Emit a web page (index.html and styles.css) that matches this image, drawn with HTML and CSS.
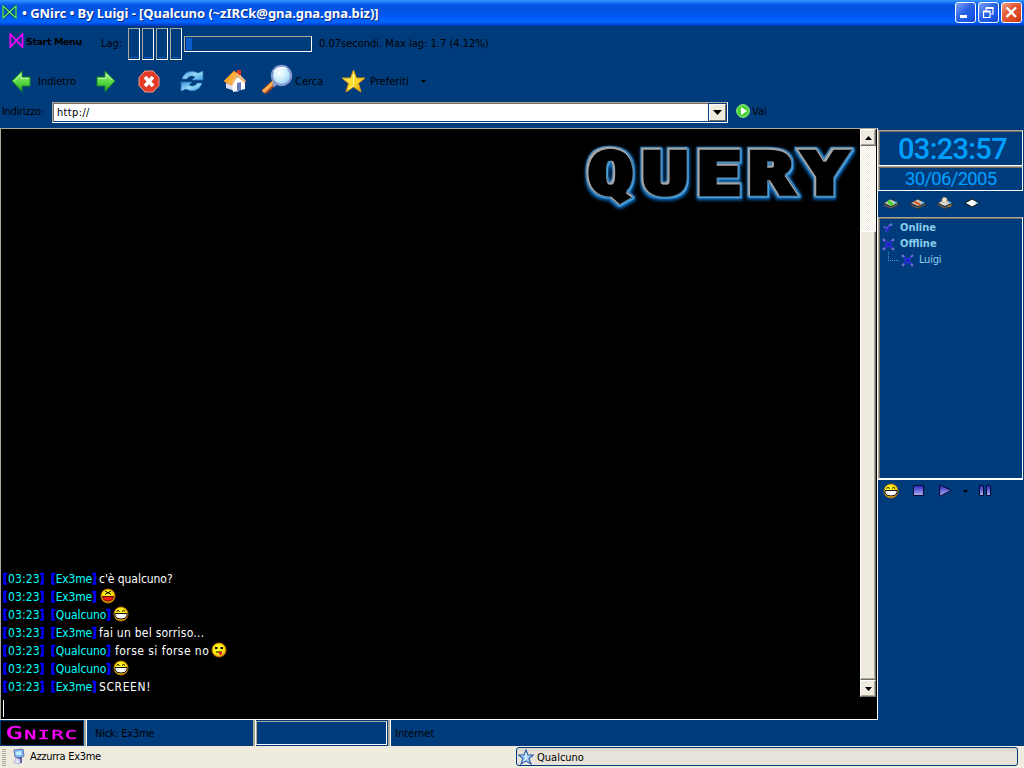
FILE: index.html
```html
<!DOCTYPE html>
<html lang="it">
<head>
<meta charset="utf-8">
<title>GNirc</title>
<link rel="stylesheet" href="styles.css">
</head>
<body>
<svg class="defs" width="0" height="0">
  <defs>
    <linearGradient id="gGreen" x1="0" y1="0" x2="0" y2="1"><stop offset="0" stop-color="#9df08a"/><stop offset=".5" stop-color="#5ddc45"/><stop offset="1" stop-color="#27a824"/></linearGradient>
    <linearGradient id="gBlue" x1="0" y1="0" x2="1" y2="1"><stop offset="0" stop-color="#2e86cf"/><stop offset=".5" stop-color="#9adcf8"/><stop offset="1" stop-color="#3e9be0"/></linearGradient>
    <linearGradient id="gStar" x1="0" y1="0" x2="1" y2="1"><stop offset="0" stop-color="#fff36a"/><stop offset=".55" stop-color="#ffd92a"/><stop offset="1" stop-color="#e09a10"/></linearGradient>
    <linearGradient id="gPlay" x1="0" y1="0" x2="0" y2="1"><stop offset="0" stop-color="#2424b8"/><stop offset="1" stop-color="#b4b4fa"/></linearGradient>
    <radialGradient id="gLens" cx=".4" cy=".35" r=".7"><stop offset="0" stop-color="#fff"/><stop offset=".5" stop-color="#cdeefb"/><stop offset="1" stop-color="#8ccbf0"/></radialGradient>
    <radialGradient id="gFace" cx=".45" cy=".4" r=".6"><stop offset="0" stop-color="#ffff40"/><stop offset=".7" stop-color="#ffe000"/><stop offset="1" stop-color="#e09000"/></radialGradient>
    <filter id="bevel" x="-10%" y="-20%" width="120%" height="150%" color-interpolation-filters="sRGB">
      <feMorphology in="SourceAlpha" operator="dilate" radius="1.5" result="fat"/>
      <feFlood flood-color="#0866b8"/><feComposite in2="fat" operator="in"/><feOffset dx="1" dy="2"/><feGaussianBlur stdDeviation="1.6" result="halo"/>
      <feMorphology in="SourceAlpha" operator="dilate" radius="1" result="thin"/>
      <feFlood flood-color="#4fa5e2"/><feComposite in2="thin" operator="in"/><feOffset dx="1" dy="1"/><feGaussianBlur stdDeviation=".5" result="blue"/>
      <feFlood flood-color="#3f7cab"/><feComposite in2="thin" operator="in"/><feOffset dx="-.5" dy="-.5"/><feGaussianBlur stdDeviation=".5" result="blue2"/>
      <feFlood flood-color="#a6a6a6"/><feComposite in2="SourceAlpha" operator="in" result="grey"/>
      <feMorphology in="SourceAlpha" operator="erode" radius="1"/><feOffset dx="1" dy="1" result="core"/>
      <feFlood flood-color="#000"/><feComposite in2="core" operator="in"/><feGaussianBlur stdDeviation=".5" result="black"/>
      <feMerge><feMergeNode in="halo"/><feMergeNode in="blue"/><feMergeNode in="blue2"/><feMergeNode in="grey"/><feMergeNode in="black"/></feMerge>
    </filter>
    <symbol id="grin" viewBox="0 0 16 16">
      <circle cx="8" cy="8" r="7" fill="url(#gFace)" stroke="#c87800" stroke-width=".8"/>
      <path d="M3.500 5.500Q5 3.300 6.600 5.500M9 5.500Q10.600 3.300 12.200 5.500" fill="none" stroke="#000" stroke-width="1"/>
      <path d="M2 7.500H14V10Q13 13 8 13Q3 13 2 10Z" fill="#fff" stroke="#111" stroke-width="1"/>
      <path d="M3 10H5M11 10H13" stroke="#ccc"/>
    </symbol>
    <symbol id="cross" viewBox="0 0 13 13">
      <path d="M1 1L12 12M12 1L1 12" fill="none" stroke="#6a6fd2" stroke-width="2.200"/>
      <path d="M3 3L10 10M10 3L3 10" stroke="#1412dc" stroke-width="1.500"/>
    </symbol>
    <symbol id="disk" viewBox="0 0 16 11">
      <path d="M0 5.500L8 1L16 5V7L8 11L0 7Z" fill="#333"/>
      <path d="M1.500 5L7.500 1.500L14.500 4.800L8 8Z" fill="#c9ccc9"/>
      <path d="M1 7L8 10L15 6.300" fill="none" stroke="#777" stroke-width=".8"/>
      <path d="M12 5L14 4.500" stroke="#3aaef0" stroke-width="2"/>
    </symbol>
  </defs>
</svg>
<div class="app">
  <header class="titlebar">
    <svg class="logo" width="15" height="14" viewBox="0 0 15 14"><path d="M1 1V13L14 1V13Z" fill="none" stroke="#004a20" stroke-width="2.500"/><path d="M1 1V13L14 1V13Z" fill="none" stroke="#66ef8c" stroke-width="1.200"/></svg>
    <h1 class="title">• GNirc • By Luigi - [Qualcuno (~zIRCk@gna.gna.gna.biz)]</h1>
    <div class="winbtns">
      <span class="winbtn"><svg width="19" height="19"><path d="M4 13.500H11" stroke="#fff" stroke-width="3"/></svg></span>
      <span class="winbtn"><svg width="19" height="19"><path d="M7 8V5H14V11H12" fill="none" stroke="#fff" stroke-width="1.200"/><path d="M4.500 8.500H11V14.500H4.500Z" fill="none" stroke="#fff" stroke-width="1.200"/><path d="M4 8.500H11.500M7 5H14.500" stroke="#fff" stroke-width="2"/></svg></span>
      <span class="winbtn close"><svg width="19" height="19"><path d="M4.500 4.500L14 14M14 4.500L4.500 14" stroke="#fff" stroke-width="2.400"/></svg></span>
    </div>
  </header>

  <div class="row lagbar">
    <svg class="start-ico" width="15" height="15" viewBox="0 0 15 15"><path d="M1.300 1V14L13.500 1V14Z" fill="none" stroke="#ff00ff" stroke-width="1.700"/></svg>
    <b class="start">Start Menu</b>
    <span class="lag">Lag:</span>
    <div class="meters"><i></i><i></i><i></i><i></i></div>
    <div class="progress"><i></i></div>
    <span class="lagtext">0.07secondi. Max lag: 1.7 (4.12%)</span>
  </div>

  <nav class="row navbar">
    <svg class="back" width="20" height="22" viewBox="0 0 20 22"><path d="M1 11L11 1V7H19V16H11V21.500Z" fill="url(#gGreen)" stroke="#168a24"/><path d="M3.500 11L10 4.500V8.500H18" fill="none" stroke="#c4f8b5"/></svg>
    <span class="t-back">Indietro</span>
    <svg class="fwd" width="20" height="22" viewBox="0 0 20 22"><path d="M19 11L9 1V7H1V16H9V21.500Z" fill="url(#gGreen)" stroke="#168a24"/><path d="M2 8.500H10V4.500L16 10" fill="none" stroke="#c4f8b5"/></svg>
    <svg class="stop" width="22" height="23" viewBox="0 0 22 23"><path d="M7 1H15L21 7.500V15.500L15 22H7L1 15.500V7.500Z" fill="#e23a26" stroke="#f6a28e"/><path d="M7 7L15 16M15 7L7 16" stroke="#fff" stroke-width="3.600"/></svg>
    <svg class="refresh" width="24" height="22" viewBox="0 0 24 22"><path d="M2 9C4 2 11 -1 18 3L23 1V10H12L15 7C12 5 8 6 7 9Z" fill="url(#gBlue)" stroke="#2474b8" stroke-width=".7"/><path d="M22 13C20 20 13 23 6 19L1 21V12H12L9 15C12 17 16 16 17 13Z" fill="url(#gBlue)" stroke="#2474b8" stroke-width=".7"/></svg>
    <svg class="home" width="24" height="24" viewBox="0 0 24 24"><path d="M14 1H18V8L14 5Z" fill="#d73518"/><path d="M3 12L9 7L15 14V23L3 19Z" fill="#d5dcf0"/><path d="M9 13L17 6L22 11V20L10 23Z" fill="#fff"/><path d="M11 2L1 12L4 14L9 16L15 5Z" fill="#ffad36" stroke="#e9851e" stroke-width=".7"/><path d="M14 4L23 12L21.500 14L14 7.500L10 15L8 14Z" fill="#f4b875"/><path d="M14 14L18 13V21L14 22Z" fill="#6679b4"/></svg>
    <svg class="search" width="34" height="32" viewBox="0 0 34 32"><path d="M15 17L3 28" stroke="#a94320" stroke-width="6"/><path d="M14 17L2 28" stroke="#ffac4c" stroke-width="3.300"/><path d="M12 22L15.500 18" stroke="#8d95c8" stroke-width="4"/><circle cx="20.500" cy="11.500" r="9.600" fill="url(#gLens)" stroke="#8597d2" stroke-width="2.200"/><path d="M13 8A9 9 0 0 1 26 5" fill="none" stroke="#fff" stroke-width="1.300"/></svg>
    <span class="t-search">Cerca</span>
    <svg class="fav" width="25" height="24" viewBox="0 0 25 24"><path d="M12.500 1L15.500 9H24L17.500 14.500L20 23L12.500 18L5 23L7.500 14.500L1 9H9.500Z" fill="url(#gStar)" stroke="#d69710" stroke-width="1"/><path d="M12.500 5V17L7 20" fill="none" stroke="#fff9a0" stroke-width="1"/></svg>
    <span class="t-fav">Preferiti</span>
    <svg class="caret" width="5" height="3"><path d="M0 0H5L2.500 3Z"/></svg>
  </nav>

  <div class="row address">
    <span class="t-addr">Indirizzo:</span>
    <div class="combo"><span class="url">http://</span><span class="drop"><svg width="9" height="5"><path d="M0 0H9L4.500 5Z"/></svg></span></div>
    <svg class="go" width="14" height="14" viewBox="0 0 14 14"><circle cx="7" cy="7" r="6.400" fill="#4ed53c" stroke="#9ced88"/><path d="M5 3L11 7L5 11Z" fill="#fff"/></svg>
    <span class="t-go">Vai</span>
  </div>

  <main class="content">
    <section class="query">
      <div class="view">
        <div class="chat">
          <svg class="banner" width="286" height="76" viewBox="0 0 286 76">
            <g filter="url(#bevel)"><text class="banner-text" transform="scale(1.3 1)" x="10.200 52.200 93.700 133.500 175" y="56">QUERY</text></g>
          </svg>
          <div class="lines">
            <p><span class="time"><b>[</b>03:23<b>]</b></span><span class="ex"><b>[</b>Ex3me<b>]</b></span><span class="m1">c'è qualcuno?</span></p>
            <p><span class="time"><b>[</b>03:23<b>]</b></span><span class="ex"><b>[</b>Ex3me<b>]</b></span><svg class="smile s1" width="16" height="16" viewBox="0 0 16 16"><circle cx="8" cy="8" r="7" fill="url(#gFace)" stroke="#c87800" stroke-width=".8"/><path d="M5 3L11 6.500M11 3L5 6.500" fill="none" stroke="#000"/><path d="M2.500 8.500H13.500Q13 13 8 13Q3 13 2.500 8.500Z" fill="#f02018" stroke="#600"/></svg></p>
            <p><span class="time"><b>[</b>03:23<b>]</b></span><span class="qu"><b>[</b>Qualcuno<b>]</b></span><svg class="smile" width="16" height="16"><use href="#grin"/></svg></p>
            <p><span class="time"><b>[</b>03:23<b>]</b></span><span class="ex"><b>[</b>Ex3me<b>]</b></span><span class="m2">fai un bel sorriso...</span></p>
            <p><span class="time"><b>[</b>03:23<b>]</b></span><span class="qu"><b>[</b>Qualcuno<b>]</b></span><span class="m3">forse si forse no</span><svg class="smile" width="16" height="16" viewBox="0 0 16 16"><circle cx="8" cy="8" r="7" fill="url(#gFace)" stroke="#c87800" stroke-width=".8"/><path d="M4 6H6.500M9.500 6H12" stroke="#000" stroke-width="2"/><path d="M5 10H11" stroke="#000"/><path d="M8 10H11V12Q9.500 14 8 12Z" fill="#e81830"/></svg></p>
            <p><span class="time"><b>[</b>03:23<b>]</b></span><span class="qu"><b>[</b>Qualcuno<b>]</b></span><svg class="smile" width="16" height="16"><use href="#grin"/></svg></p>
            <p><span class="time"><b>[</b>03:23<b>]</b></span><span class="ex"><b>[</b>Ex3me<b>]</b></span><span class="m4">SCREEN!</span></p>
          </div>
        </div>
        <div class="scroll">
          <span class="sbtn"><svg width="7" height="4"><path d="M0 4H7L3.500 0Z"/></svg></span>
          <span class="track"></span>
          <span class="thumb"></span>
          <span class="sbtn"><svg width="7" height="4"><path d="M0 0H7L3.500 4Z"/></svg></span>
        </div>
      </div>
      <div class="input"><i></i></div>
    </section>

    <aside class="side">
      <div class="clock"><span>03:23:57</span></div>
      <div class="date"><span>30/06/2005</span></div>
      <div class="tools">
        <svg width="16" height="13" viewBox="0 -1 16 13"><use href="#disk" width="16" height="11"/><path d="M5 3L10 7" stroke="#42d52c" stroke-width="3"/></svg>
        <svg width="16" height="13" viewBox="0 -1 16 13"><use href="#disk" width="16" height="11"/><path d="M4 3.500L10 6.500" stroke="#e05a20" stroke-width="2.500"/></svg>
        <svg width="16" height="13" viewBox="0 -1 16 13"><use href="#disk" width="16" height="11"/><circle cx="7.500" cy="2" r="2.500" fill="#efe4cc" stroke="#bda987"/><path d="M4.500 7Q7.500 2 11 6Z" fill="#ddd"/><path d="M11 8H14" stroke="#a66b34" stroke-width="2"/></svg>
        <svg width="16" height="13" viewBox="0 -1 16 13"><path d="M1 5L8 1L15.500 5L8 9Z" fill="#fff" stroke="#111" stroke-width="1"/><path d="M11.500 5H14" stroke="#3aaef0" stroke-width="1.500"/></svg>
      </div>
      <div class="tree">
        <div class="node"><svg class="check" width="13" height="13" viewBox="0 0 13 13"><path d="M2 5Q5 6 5 10Q6 4 10 2" fill="none" stroke="#7076e0" stroke-width="2.200"/><path d="M3 5.500L5.200 9L8 4" fill="none" stroke="#2020c8" stroke-width="1.700"/></svg><b class="online">Online</b></div>
        <div class="node"><svg width="13" height="13"><use href="#cross"/></svg><b class="offline">Offline</b></div>
        <div class="node leaf"><i class="branch"></i><svg width="13" height="13"><use href="#cross"/></svg><span class="luigi">Luigi</span></div>
      </div>
      <div class="player">
        <svg class="pg" width="16" height="16"><use href="#grin"/></svg>
        <svg class="ps" width="11" height="11"><path d="M.5 .5H10.500V10.500H.5Z" fill="url(#gPlay)" stroke="#080830"/></svg>
        <svg class="pp" width="13" height="13"><path d="M.7 .8L12.300 6.500L.7 12.200Z" fill="url(#gPlay)" stroke="#080830"/></svg>
        <svg class="pc" width="5" height="3"><path d="M0 0H5L2.500 3Z"/></svg>
        <svg class="pz" width="12" height="11"><path d="M.5 .5H4.500V10.500H.5ZM7.500 .5H11.500V10.500H7.500Z" fill="url(#gPlay)" stroke="#080830"/></svg>
      </div>
    </aside>
  </main>

  <div class="status">
    <div class="brand"><span>Gnirc</span></div>
    <div class="cell c1"><span class="t-nick">Nick: Ex3me</span></div>
    <div class="cell c2"><div class="empty"></div></div>
    <div class="cell c3"><span class="t-net">Internet</span></div>
  </div>

  <footer class="switchbar">
    <i class="grip"></i>
    <svg class="net" width="13" height="17" viewBox="0 0 13 17"><path d="M2 2L11 1L12 8L8 10L3 9Z" fill="#7fbdf0" stroke="#6e70b4"/><path d="M3.500 4L9 3L9.500 7H4.500Z" fill="#c2efff"/><path d="M5 9H10V15H6Z" fill="#5a5aa6"/><path d="M4 10L8 11V16L2 15Z" fill="#dde4f4" stroke="#9090c0" stroke-width=".6"/></svg>
    <span class="t-azz">Azzurra Ex3me</span>
    <div class="task">
      <svg width="16" height="16" viewBox="0 0 16 16"><path d="M8 1L10 6H15.500L11 9.500L13 15L8 11.800L3 15L5 9.500L.5 6H6Z" fill="#a8d4fa" stroke="#2c5ca8" stroke-width="1.100"/><path d="M8 4V10L5.500 12" fill="none" stroke="#fff"/></svg>
      <span class="t-qual">Qualcuno</span>
    </div>
  </footer>
</div>
</body>
</html>
```
FILE: styles.css
```css
* { box-sizing: border-box; }
body { margin: 0; }
.defs { position: absolute; }
svg { display: block; flex: none; }
.app {
  width: 1024px; height: 768px; overflow: hidden;
  display: flex; flex-direction: column;
  background: #003c7b; color: #000;
  font: 11px/14px "DejaVu Sans Condensed", "DejaVu Sans", sans-serif;
  white-space: nowrap;
}
.app span, .app b { flex: none; }

.titlebar {
  height: 26px; flex: none; display: flex; align-items: flex-start; padding: 0 2px 0 2px;
  background: linear-gradient(#3a95ff 0, #1d7dfc 2px, #0357e4 5px, #0153e2 10px, #005dfb 18px, #0066ff 22px, #0040cc 25px, #0034b4 26px);
}
.logo { margin-top: 5px; }
.title {
  margin: 5px auto 0 5px; font: bold 13px/17px "Noto Sans", "Open Sans", sans-serif;
  color: #fff; text-shadow: 1px 1px 0 #0a2a82; letter-spacing: -.05px;
}
.winbtns { display: flex; gap: 2px; margin-top: 2px; }
.winbtn {
  width: 21px; height: 21px; border: 1px solid #fff; border-radius: 3px;
  background: linear-gradient(135deg, #7ea4f8, #2c62e4 45%, #1858e8 75%, #1444c0);
}
.close { background: linear-gradient(135deg, #f0a48c, #e25a38 40%, #dc4720 75%, #b83210); }

.row { display: flex; flex: none; align-items: flex-start; }
.lagbar { height: 36px; padding-left: 9px; }
.start-ico { margin-top: 7px; }
.start { width: 74px; margin: 9px 0 0 2px; font: bold 9.500px/14px "DejaVu Sans", sans-serif; letter-spacing: -.4px; }
.start + .lag { width: 28px; margin: 11px 0 0 1px; }
.meters { display: flex; gap: 2px; margin-top: 2px; margin-left: -1px; }
.meters i {
  width: 12px; height: 32px; border: 1px solid; border-color: #aca899 #fff #fff #aca899;
  background: linear-gradient(#0a5cc0, #0a5cc0) 50% 28px / 8px 1px no-repeat;
}
.progress { width: 128px; height: 16px; margin: 10px 0 0 2px; padding: 1px; border: 1px solid; border-color: #aca899 #fff #fff #aca899; }
.progress i { display: block; width: 6px; height: 12px; background: #0a5cc8; }
.lagtext { margin: 11px 0 0 7px; }

.navbar { height: 38px; padding-left: 11px; }
.back { margin-top: 8px; }
.t-back { width: 57px; margin: 13px 0 0 7px; }
.fwd { margin: 8px 0 0 1px; }
.stop { margin: 8px 0 0 22px; }
.refresh { margin: 8px 0 0 20px; }
.home { margin: 7px 0 0 19px; }
.search { margin: 2px 0 0 14px; }
.t-search { width: 45px; margin: 13px 0 0 0; }
.fav { margin: 7px 0 0 1px; }
.t-fav { width: 51px; margin: 13px 0 0 4px; }
.caret { margin-top: 18px; }

.address { height: 28px; padding-left: 2px; }
.t-addr { width: 50px; margin-top: 5px; letter-spacing: -.3px; }
.combo {
  width: 676px; height: 21px; margin-top: 2px; display: flex; background: #fff;
  border: 1px solid; border-color: #aca899 #fff #fff #aca899;
  box-shadow: inset 1px 1px #716f64, inset -1px -1px #003c7b;
}
.url { margin: 3px auto 0 4px; letter-spacing: .35px; }
.drop {
  width: 17px; height: 17px; margin: 1px; display: flex; align-items: center; justify-content: center;
  background: #efebde; border: 1px solid; border-color: #fff #716f64 #716f64 #fff; outline: 1px solid #003c7b;
}
.go { margin: 4px 0 0 8px; }
.t-go { margin: 5px 0 0 2px; }

.content { flex: none; display: flex; height: 592px; }
.query {
  width: 878px; display: flex; flex-direction: column; background: #000;
  border: 1px solid; border-color: #aca899 #fff #fff #aca899;
}
.view { height: 568px; display: flex; }
.chat { width: 859px; display: flex; flex-direction: column; justify-content: space-between; }
.banner { align-self: flex-end; margin: 8px 0 0; }
.banner-text {
  font: bold 57px "DejaVu Sans Mono", monospace;
  fill: #000; stroke: #000; stroke-width: 6.500px; stroke-linejoin: miter;
}
.lines { padding: 0 0 1px 2px; font: 12px/18px "DejaVu Sans Condensed", "DejaVu Sans", sans-serif; color: #fff; }
.lines p { margin: 0; height: 18px; display: flex; }
.lines b { color: #00f; -webkit-text-stroke: .5px #00f; }
.time, .ex, .qu { color: #0ff; }
.time { width: 48px; letter-spacing: .1px; }
.ex { width: 48px; letter-spacing: -.2px; }
.qu { width: 64px; letter-spacing: -.1px; }
.m1 { letter-spacing: -.05px; }
.m2 { letter-spacing: .25px; }
.m3 { width: 98px; letter-spacing: .45px; }
.m4 { letter-spacing: .6px; }
.smile { margin-left: -2px; }
.s1 { margin-left: 1px; }
.scroll { width: 16px; display: flex; flex-direction: column; }
.sbtn, .thumb { background: #efebde; border: 1px solid; border-color: #fff #716f64 #716f64 #fff; box-shadow: inset -1px -1px #aca899; }
.sbtn { height: 17px; display: flex; align-items: center; justify-content: center; }
.track { height: 85px; background: repeating-conic-gradient(#fff 0 25%, #efebde 0 50%) 0 0 / 2px 2px; }
.thumb { height: 449px; }
.input { flex: 1; padding: 3px 0 0 2px; }
.input i { display: block; width: 1px; height: 17px; background: #fff; }

.side { width: 146px; display: flex; flex-direction: column; padding-top: 2px; color: #00a0ff; }
.clock, .date, .tree { border: 1px solid; border-color: #aca899 #fff #fff #aca899; box-shadow: inset 1px 1px #716f64; width: 145px; flex: none; }
.clock { height: 36px; padding: 2px 0 0 19px; font: 500 29px/33px Roboto, "Liberation Sans", sans-serif; letter-spacing: -.65px; }
.date { height: 25px; padding: 1px 0 0 26px; font: 18.500px/22px Roboto, "Liberation Sans", sans-serif; letter-spacing: -.7px; }
.clock span, .date span { display: block; }
.tools { height: 26px; display: flex; gap: 11px; padding: 6px 0 0 5px; }
.tree { height: 263px; padding: 2px 0 0 3px; border-bottom-width: 2px; color: #87ceeb; }
.node { height: 16px; display: flex; align-items: center; gap: 5px; }
.leaf { gap: 4px; }
.luigi { margin-left: 1px; letter-spacing: -.2px; }
.branch { width: 11px; height: 9px; margin: -8px -2px 0 6px; border: dotted #3d9be0; border-width: 0 0 1px 1px; }
.player { display: flex; align-items: flex-start; padding: 3px 0 0 5px; }
.ps { margin: 2px 0 0 14px; }
.pp { margin: 1px 0 0 15px; }
.pc { margin: 7px 0 0 11px; }
.pz { margin: 2px 0 0 11px; }

.status { height: 26px; flex: none; display: flex; }
.brand {
  width: 84px; background: #000; border: 1px solid #003c7b; padding-left: 5px;
  font: 18px/24px "DejaVu Sans Mono", monospace; font-variant: small-caps; color: #f0f;
  -webkit-text-stroke: .4px #f0f; letter-spacing: 1px;
}
.brand span { display: inline-block; transform: scaleX(1.540); transform-origin: 0 50%; }
.cell { border-left: 2px solid #aca899; box-shadow: inset 1px 0 #fff; padding: 7px 0 0 9px; }
.c1 { width: 169px; }
.t-nick { letter-spacing: -.25px; }
.c2 { width: 135px; padding: 1px 0 0 1px; }
.c3 { padding-left: 5px; }
.empty { width: 131px; height: 24px; border: 1px solid; border-color: #aca899 #fff #fff #aca899; }

.switchbar { height: 22px; flex: none; display: flex; align-items: flex-start; background: #efebde; padding-left: 2px; }
.grip { width: 4px; height: 17px; margin-top: 3px; background: repeating-linear-gradient(#aca899 0 1px, #efebde 1px 2px); }
.net { margin: 2px 0 0 6px; }
.t-azz { width: 486px; margin: 4px 0 0 5px; letter-spacing: -.3px; }
.task {
  width: 502px; height: 19px; margin-top: 1px; padding: 1px 0 0 1px; display: flex; gap: 3px;
  border: 1px solid #003c7b; border-radius: 3px; background: linear-gradient(#dcd6cc, #e7e3da 5px, #e7e3da);
}
.task span { margin-top: 2px; }
```
